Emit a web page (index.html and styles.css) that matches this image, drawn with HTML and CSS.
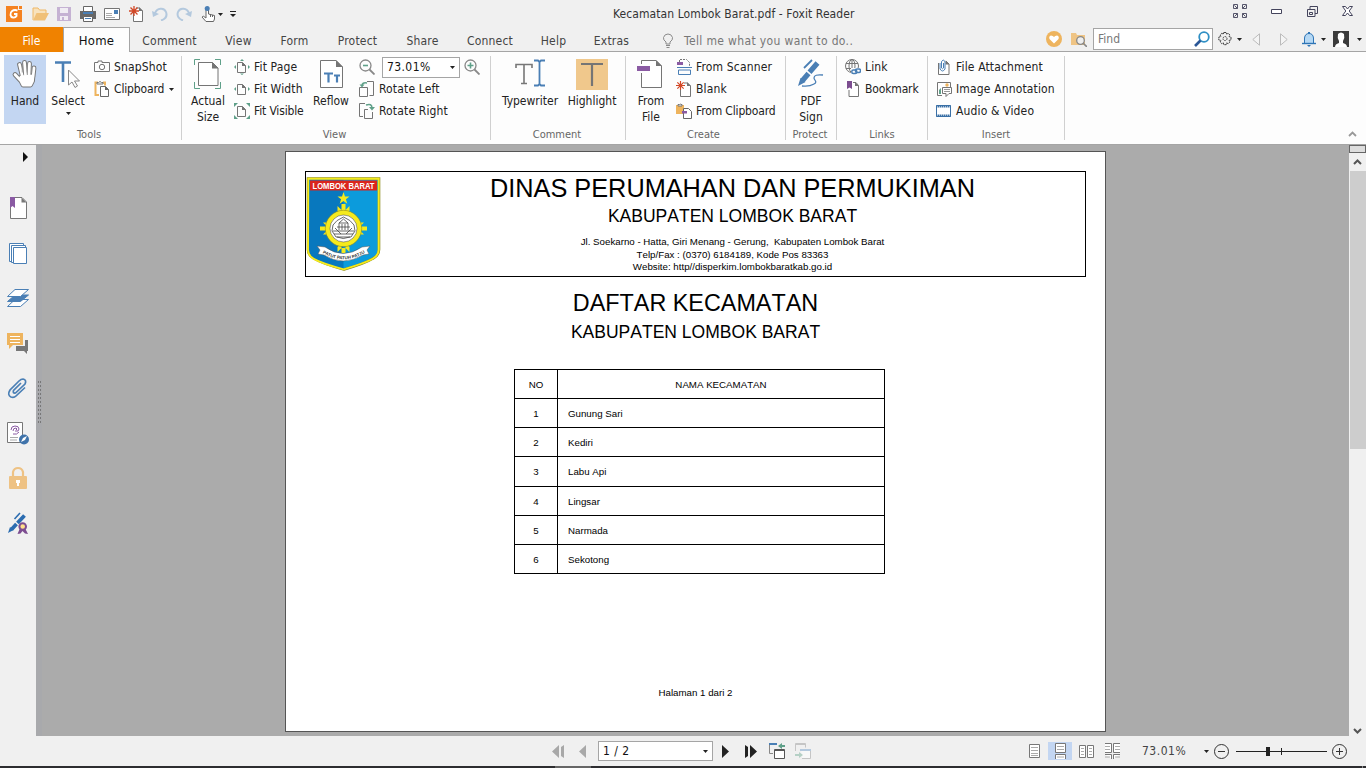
FILE: index.html
```html
<!DOCTYPE html>
<html lang="id">
<head>
<meta charset="utf-8">
<title>Kecamatan Lombok Barat.pdf - Foxit Reader</title>
<link rel="stylesheet" href="styles.css">
</head>
<body>
<svg class="defs" width="0" height="0">
  <defs>
    <symbol id="caret" viewBox="0 0 5 3"><path d="M0 0h5L2.5 3z" fill="#222"/></symbol>
    <symbol id="page" viewBox="0 0 9 11"><path d="M.5.5h5l3 3v7h-8z" fill="#fdfdfd" stroke="#757575"/><path d="M5 0l4 4H5z" fill="#757575"/></symbol>
    <symbol id="star" viewBox="0 0 10 10"><path d="M5 0v10M0 5h10M1.5 1.5l7 7M8.5 1.5l-7 7" stroke="#d24726" stroke-width="1.3"/></symbol>
  </defs>
</svg>
<div class="app">
  <header class="titlebar">
    <div class="quick">
      <span class="q first"><svg width="16" height="16"><path d="M0 0h12v4h4v12H0z" fill="#f58220"/><path d="M13 0h3v3h-3z" fill="#f58220"/><path d="M11.500 4.500C7 3 4 6 4.500 9c.5 3 4.500 3.500 6 1V8H8" fill="none" stroke="#fff" stroke-width="1.900"/></svg></span>
      <span class="q"><svg width="17" height="14"><path d="M1 13V1h5l1.500 2H14v3" fill="#f8e2bd" stroke="#efb867"/><path d="M1 13.500L4.500 6H17l-4 7.500z" fill="#f0c078"/></svg></span>
      <span class="q"><svg width="14" height="14"><path d="M0 0h14v14H0z" fill="#c5b2d3"/><path d="M3 1h8v5H3zM3 9h8v4H3z" fill="#f0edf3"/><path d="M5 10h2v3H5z" fill="#c5b2d3"/></svg></span>
      <span class="q"><svg width="16" height="16"><path d="M3.500 5V.5h9V5" fill="#fff" stroke="#666"/><path d="M0 5h16v8H0z" fill="#686868"/><path d="M3 6h10v2H3z" fill="#4a7fb5"/><path d="M3.500 10.500h9v5h-9z" fill="#fff" stroke="#666"/><path d="M5 12.500h6" stroke="#4a7fb5"/></svg></span>
      <span class="q"><svg width="16" height="12"><path d="M.5.500h15v11H.5z" fill="#fff" stroke="#757575"/><path d="M10 2h4v4h-4z" fill="#4a7fb5"/><path d="M2 5.500h6M2 7.500h6M2 9.500h9" stroke="#aaa"/></svg></span>
      <span class="q"><svg width="15" height="16"><path d="M4.500 6v9.500h9V5l-3-3H7" fill="#fff" stroke="#757575"/><path d="M10 1l4 4h-4z" fill="#757575"/><use href="#star" width="10" height="10"/></svg></span>
      <span class="q"><svg width="16" height="14"><path d="M3 6C5 1 12 0 14 5c1.500 4-1 7-5 8.500" fill="none" stroke="#b4c9de" stroke-width="2"/><path d="M0 4l1 6 6-3z" fill="#b4c9de"/></svg></span>
      <span class="q"><svg width="16" height="14"><path d="M13 6C11 1 4 0 2 5c-1.500 4 1 7 5 8.500" fill="none" stroke="#b4c9de" stroke-width="2"/><path d="M16 4l-1 6-6-3z" fill="#b4c9de"/></svg></span>
      <span class="q"><svg width="15" height="16"><path d="M5 10V3.500q1.200-2 2.500 0V8l6 1.500v3.500l-1 2.500H5L1 11q1-2 4 1z" fill="#fff" stroke="#666"/><path d="M9.500 8.500V11M11.500 9v2" stroke="#666"/><circle cx="6.200" cy="2.500" r="2.500" fill="#4a7fb5"/></svg></span>
      <svg class="caret" width="5" height="3"><use href="#caret"/></svg>
      <svg class="more" width="6" height="6"><path d="M0 .5h6" stroke="#222"/><path d="M0 3h6L3 6z" fill="#222"/></svg>
    </div>
    <div class="title">Kecamatan Lombok Barat.pdf - Foxit Reader</div>
    <div class="wins">
      <svg width="14" height="14" fill="none" stroke="#55556a"><path d="M.5.5h4v4h-4zM9.500.5h4v4h-4zM.5 9.500h4v4h-4zM9.500 9.500h4v4h-4zM1.500 1.500l3 3M12.500 1.500l-3 3M1.500 12.500l3-3M12.500 12.500l-3-3"/></svg>
      <svg width="11" height="5"><path d="M.5.500h10v4H.5z" fill="#fff" stroke="#44445c"/></svg>
      <svg width="11" height="11" fill="#f0f0f0" stroke="#44445c"><path d="M3 .5h7.500v7H3z"/><path d="M.5 3.500h7.500v7H.5z"/><path d="M2.500 6.500h3v2h-3z"/></svg>
      <svg width="11" height="10"><path d="M.5.5h3l2 2.500 2-2.500h3L7.200 5l3.300 4.500h-3l-2-2.500-2 2.500h-3L3.800 5z" fill="#fff" stroke="#44445c"/></svg>
    </div>
  </header>
  <nav class="tabs">
    <span class="file">File</span><span class="home">Home</span>
    <span class="tab w79">Comment</span><span class="tab w59">View</span><span class="tab w53">Form</span><span class="tab w73">Protect</span><span class="tab w57">Share</span><span class="tab w78">Connect</span><span class="tab w49">Help</span><span class="tab w67">Extras</span>
    <svg class="bulb" width="12" height="15" fill="none" stroke="#8a8a8a"><path d="M4 11V9Q1 7 1.500 4.500 2.500 1 6 1t4.500 3.500Q11 7 8 9v2zM4 12.500h4M4.500 14.500h3"/></svg>
    <span class="tell">Tell me what you want to do..</span>
    <div class="tools">
      <svg class="heart" width="16" height="16"><circle cx="8" cy="8" r="8" fill="#eeb45e"/><path d="M8 12.500L3.500 8Q2.500 5 5 4.500q2 0 3 1.500 1-1.500 3-1.500 2.500.5 1.500 3.500z" fill="#fff"/></svg>
      <svg class="fold" width="16" height="15"><path d="M0 1h5l1 2h8v10H0z" fill="#efc484"/><circle cx="9.500" cy="8.500" r="3.800" fill="#eee" stroke="#888" stroke-width="1.300"/><path d="M12 11l4 4" stroke="#888" stroke-width="1.600"/></svg>
      <div class="find"><span>Find</span><svg width="16" height="16"><circle cx="10" cy="6" r="4.800" fill="#fff" stroke="#2f8fc4" stroke-width="1.800"/><path d="M6.500 9.500L1 15" stroke="#2b5797" stroke-width="2.600"/></svg></div>
      <svg class="gear" width="14" height="14" fill="none" stroke="#444"><path d="M5.800.5h2.400l.4 1.600 1.600-.8 1.700 1.700-.8 1.600 1.900.5v2.800l-1.900.5.8 1.600-1.700 1.700-1.600-.8-.4 1.800H5.800l-.4-1.800-1.600.8-1.700-1.700.8-1.600L.8 8V5.100l2.100-.5L2.100 3l1.700-1.700 1.600.8z" stroke-dasharray="2.400 .6"/><circle cx="7" cy="6.600" r="2" stroke-dasharray="1.500 .6"/></svg>
      <svg class="c1" width="5" height="3"><use href="#caret"/></svg>
      <svg class="p1" width="8" height="13"><path d="M7.500.8v11.400L.8 6.500z" fill="#f4f4f4" stroke="#bbb"/></svg>
      <svg class="p2" width="8" height="13"><path d="M.5.8v11.400l6.700-5.700z" fill="#f4f4f4" stroke="#bbb"/></svg>
      <svg class="bell" width="14" height="15"><path d="M2.500 11.500V6Q3 1.500 7 1.500T11.500 6v5.500z" fill="#b5d8f4" stroke="#2e75b6"/><path d="M0 11.500h14" stroke="#2e75b6" stroke-width="1.400"/><path d="M5 13h4l-2 2zM6 0h2v2H6z" fill="#2e75b6"/></svg>
      <svg class="c1" width="5" height="3"><use href="#caret"/></svg>
      <svg class="ava" width="16" height="16"><path d="M0 0h16v16H0z" fill="#3b3b3b"/><path d="M2 16q0-3 4-4v-2Q4 7 5 3q3-3 6 0 1 4-1 7v2q4 1 4 4z" fill="#fff"/></svg>
      <svg class="c2" width="5" height="3"><use href="#caret"/></svg>
    </div>
  </nav>
  <section class="ribbon">
    <div class="group g-tools"><div class="body">
      <div class="big hand on"><svg width="32" height="36" stroke-linecap="round" stroke-linejoin="round"><path d="M10.500 9.500L13 20M15.500 7.500L16.500 20M20.500 8.500L20 20M25 13L24 22M6 19.500L12 26M12 22L24 21 23.500 26 21.500 30H14L12 26z" fill="none" stroke="#777" stroke-width="4.800"/><path d="M10.500 9.500L13 20M15.500 7.500L16.500 20M20.500 8.500L20 20M25 13L24 22M6 19.500L12 26M12 22L24 21 23.500 26 21.500 30H14L12 26z" fill="#fff" stroke="#fff" stroke-width="2.800"/><path d="M13.200 10v7M18.200 9v8M22.700 12v6" stroke="#999" stroke-width=".8"/></svg><b>Hand</b></div>
      <div class="big select"><svg width="32" height="36"><path d="M3 7.500h16M11 7v20" stroke="#4a7fb5" stroke-width="2.600" fill="none"/><path d="M16.500 15v15l3.500-3 3 5.500 2.500-1.500-3-5h5z" fill="#fdfdfd" stroke="#888"/></svg><b>Select</b><svg class="down" width="5" height="3"><use href="#caret"/></svg></div>
      <div class="list">
        <div><svg width="16" height="16"><path d="M.5 3.500H4V2h4v1.500h7.500v9H.5z" fill="#fdfdfd" stroke="#757575"/><circle cx="8" cy="8" r="2.700" fill="none" stroke="#757575"/></svg>SnapShot</div>
        <div class="tight"><svg width="16" height="16"><path d="M4 1.500H1.500v12.500H5M9 1.500h2v3" fill="none" stroke="#eeb45e" stroke-width="2"/><path d="M3 3V1.500h1.500Q6-.5 7.500 1.500H9V3z" fill="#fff" stroke="#757575"/><path d="M6.500 5.500h5l3 3v7h-8z" fill="#fff" stroke="#666"/><path d="M11 5l4 4h-4z" fill="#666"/></svg>Clipboard<svg class="next" width="5" height="3"><use href="#caret"/></svg></div>
      </div></div><h6>Tools</h6>
    </div>
    <div class="group g-view"><div class="body">
      <div class="big actual"><svg width="32" height="36"><path d="M2.500 10V4.500h5.500M23 4.500h5.500V10M2.500 27v6.500H8M23 33.500h5.500V27" fill="none" stroke="#5fa089"/><path d="M6.500 7.500h14l5.500 5.500v17.500H6.500z" fill="#fff" stroke="#757575"/><path d="M20 7l6.500 6.500H20z" fill="#757575"/></svg><b>Actual<br>Size</b></div>
      <div class="list fit">
        <div><svg width="16" height="16"><use href="#page" x="3" y="3" width="9" height="11"/><path d="M8 0l2 2H6zM8 16l2-1.500H6zM0 8l2-2v4zM16 8l-2-2v4z" fill="#5fa089"/></svg>Fit Page</div>
        <div><svg width="16" height="16"><use href="#page" x="3" y="3" width="9" height="11"/><path d="M0 8l2-2v4zM16 8l-2-2v4z" fill="#5fa089"/></svg>Fit Width</div>
        <div class="tight"><svg width="16" height="16"><use href="#page" x="3" y="3" width="9" height="11"/><path d="M0 0h4L0 4zM16 0h-4l4 4zM0 16h4l-4-4zM16 16h-4l4-4z" fill="#5fa089"/></svg>Fit Visible</div>
      </div>
      <div class="big reflow"><svg width="32" height="36"><path d="M5.500 5.500H21l6.500 6.500v20.500h-22z" fill="#fff" stroke="#757575"/><path d="M21 5l7 7h-7z" fill="#757575"/><path d="M9 18.500h9M13.500 18v9.500M19 20.500h6M22 20v7.500" stroke="#4a7fb5" stroke-width="2.200"/></svg><b>Reflow</b></div>
      <div class="list zoom">
        <div><svg width="16" height="16"><circle cx="6.500" cy="6.500" r="5.500" fill="#fdfdfd" stroke="#888" stroke-width="1.300"/><path d="M10.500 10.500l5 5" stroke="#888" stroke-width="1.800"/><path d="M4 6.500h5" stroke="#5fa089" stroke-width="1.600"/></svg><span class="combo">73.01%<svg width="5" height="3"><use href="#caret"/></svg></span><svg width="16" height="16"><circle cx="6.500" cy="6.500" r="5.500" fill="#fdfdfd" stroke="#888" stroke-width="1.300"/><path d="M10.500 10.500l5 5" stroke="#888" stroke-width="1.800"/><path d="M3.500 6.500h6M6.500 3.500v6" stroke="#5fa089" stroke-width="1.600"/></svg></div>
        <div><svg width="16" height="16" fill="none" stroke="#757575"><path d="M8 .5h6.500v14h-4M.5 6.500h8v9h-8z"/><path d="M3 5q0-4 5-3" stroke="#5fa089" stroke-width="1.500"/><path d="M.5 3.500h5L3 6.500z" fill="#5fa089" stroke="none"/></svg>Rotate Left</div>
        <div><svg width="16" height="16" fill="none" stroke="#757575"><path d="M6 .5H.5v13H4M5.500 15.500v-9H9M13.500 9v6.500h-8"/><path d="M7 2q6-2 6 3" stroke="#5fa089" stroke-width="1.500"/><path d="M10 4h6l-3 3.500z" fill="#5fa089" stroke="none"/></svg>Rotate Right</div>
      </div></div><h6>View</h6>
    </div>
    <div class="group g-comment"><div class="body">
      <div class="big type"><svg width="32" height="36"><path d="M2 13V9.500h16V13M10 9v20M7 28.500h6" fill="none" stroke="#777" stroke-width="1.600"/><path d="M20 5.500h4l1.500 1.500L27 5.500h4M20 30.500h4l1.500-1.500 1.500 1.500h4M25.500 6v24" fill="none" stroke="#4a7fb5" stroke-width="1.800"/></svg><b>Typewriter</b></div>
      <div class="big high"><svg width="32" height="36"><path d="M0 4h32v31H0z" fill="#f0c88c"/><path d="M5 9h22M16 9v22" stroke="#757575" stroke-width="2.200"/></svg><b>Highlight</b></div></div><h6>Comment</h6>
    </div>
    <div class="group g-create"><div class="body">
      <div class="big from"><svg width="32" height="36"><path d="M6.500 9V5.500H21l5.500 5.500v21.500h-20V18" fill="#fff" stroke="#757575"/><path d="M21 5l6 6h-6z" fill="#757575"/><path d="M2 11h13v5H2z" fill="#8a5aa3"/></svg><b>From<br>File</b></div>
      <div class="list">
        <div><svg width="16" height="16"><path d="M3.500 3V.5h7l3 3V7" fill="none" stroke="#757575" stroke-dasharray="2 1"/><path d="M1 3h6v3H1z" fill="#8a5aa3"/><path d="M1 8.500h15M2.500 11v4.500h12V11M2.500 11h12" fill="none" stroke="#4a7fb5"/></svg>From Scanner</div>
        <div><svg width="16" height="16"><path d="M4.500 6v9.500h10V5l-3-3H8" fill="#fff" stroke="#757575"/><path d="M11 1l4 4h-4z" fill="#757575"/><use href="#star" width="9" height="9"/></svg>Blank</div>
        <div class="tight"><svg width="16" height="16"><path d="M0 2h8v9H0z" fill="#eeb45e"/><path d="M2 3V1.500h1.500Q4 .5 5 1.500h1V3z" fill="#fff" stroke="#757575"/><path d="M7.500 5.500h5l3 3v7h-8z" fill="#fff" stroke="#666"/><path d="M6 8h5v2.500H6z" fill="#8a5aa3"/></svg>From Clipboard</div>
      </div></div><h6>Create</h6>
    </div>
    <div class="group g-protect"><div class="body">
      <div class="big sign"><svg width="32" height="36" fill="none" stroke="#4a7fb5"><path d="M7.500 25.500L13.500 18.500M14.500 17.300L22.500 8" stroke-width="5.200"/><path d="M3 31l2.500-8 5 4z" fill="#4a7fb5" stroke="none"/><path d="M9 13l8-8" stroke-width="1.800"/><path d="M28 20q-9-1-9 3c0 2 4 4 0 6-4 2.500-8 2.500-12 2" stroke-width="1.300"/></svg><b>PDF<br>Sign</b></div></div><h6>Protect</h6>
    </div>
    <div class="group g-links"><div class="body">
      <div class="list">
        <div><svg width="16" height="16"><g fill="none" stroke="#757575"><circle cx="7" cy="7" r="6.500"/><ellipse cx="7" cy="7" rx="3" ry="6.500"/><path d="M1 4.500h12M1 9.500h12M7 1v13"/></g><path d="M6 9h10v7H6z" fill="#fdfdfd"/><rect x="6.800" y="11" width="5" height="3.500" rx="1.500" fill="none" stroke="#4a7fb5" stroke-width="1.500"/><rect x="10.500" y="10" width="5" height="3.500" rx="1.500" fill="none" stroke="#4a7fb5" stroke-width="1.500"/></svg>Link</div>
        <div class="tight"><svg width="16" height="16"><path d="M8 1.500h3l2.500 3v11H4V9" fill="#fff" stroke="#757575"/><path d="M10 1l4 4h-4z" fill="#757575"/><path d="M2 0h5v8L4.500 6.500 2 8z" fill="#7c4d90"/></svg>Bookmark</div>
      </div></div><h6>Links</h6>
    </div>
    <div class="group g-insert"><div class="body">
      <div class="list">
        <div><svg width="16" height="16"><path d="M2.500 4v11.500h10.500V5l-3-3" fill="#fff" stroke="#757575"/><path d="M9.500 1.500l4 4h-4z" fill="#757575"/><path d="M4 4v6q2.500 4 5 0V2.500q-1.800-3-3.500 0V9q1 1.500 2 0V4" fill="none" stroke="#4a7fb5"/></svg>File Attachment</div>
        <div><svg width="16" height="16"><path d="M6 14.500H1.500v-13h13V6" fill="#fff" stroke="#757575"/><path d="M3 13V9l2-2v6z" fill="#5fa089"/><circle cx="11" cy="4" r="1.700" fill="#eeb45e"/><path d="M6.500 6.500h9v6H13l-3 3v-3H6.500z" fill="#fff" stroke="#757575"/><path d="M8 8.500h6M8 10.500h6" stroke="#999"/></svg>Image Annotation</div>
        <div><svg width="16" height="16"><path d="M.5 2.500h14v11H.5z" fill="#fff" stroke="#3b70a6"/><path d="M0 3.500h15M0 12.500h15" stroke="#3b70a6" stroke-width="2"/><path d="M1 4h14M1 12h14" stroke="#fff" stroke-dasharray="1 1"/></svg>Audio &amp; Video</div>
      </div></div><h6>Insert</h6>
    </div>
    <svg class="fold-up" width="9" height="6"><path d="M1 5l3.500-3.500L8 5" fill="none" stroke="#999" stroke-width="1.800"/></svg>
  </section>
  <main class="work">
    <aside class="side">
      <svg class="tri" width="5" height="10"><path d="M0 0v10l5-5z" fill="#111"/></svg>
      <div class="s"><svg width="22" height="24"><path d="M3.500 1.500H15l4.500 4.500v16.500h-16z" fill="#fff" stroke="#777"/><path d="M14.500 1.500l5 5h-5z" fill="#777"/><path d="M3 1h5v11l-2.500-2L3 12z" fill="#8a5aa3"/></svg></div>
      <div class="s"><svg width="22" height="24" fill="#fff" stroke="#4a7fb5"><path d="M2.500 2.500h14v18h-14z"/><path d="M4.500 4.500h14v17h-14z"/><path d="M6.500 6.500h13v16h-13z"/></svg></div>
      <div class="s"><svg width="24" height="22" fill="#fff" stroke="#4a7fb5"><path d="M1.500 19.500L9 12.500h13.500l-8 7z"/><path d="M1.500 14.500L9 8h13.500l-8 6.500z" fill="#4a7fb5"/><path d="M1.500 9.500L9 2.500h13.500l-8 7z"/></svg></div>
      <div class="s"><svg width="22" height="22"><path d="M9 8h12v11h-1v3l-3-3H9z" fill="#777"/><path d="M0 0h18v14H0z" fill="#f0f0f0"/><path d="M0 1h16v12H6l-4 4v-4H0z" fill="#eeb45e"/><path d="M3 4.500h10M3 7.500h10M3 10.500h10" stroke="#fff"/></svg></div>
      <div class="s"><svg width="22" height="22"><path d="M14 6L6.500 13.500q-1 3 2 2.500L18 7q2-4-2-5-2 0-4 2L3 13q-3 5 1 7 3 1 5-1l9-8.500" fill="none" stroke="#4a7fb5" stroke-width="1.700"/></svg></div>
      <div class="s"><svg width="24" height="24"><path d="M1.500 1.500h15v20h-15z" fill="#fff" stroke="#777"/><path d="M5 9q0-4 4-4t4 3-4 2M7 10q0-3 3-3 2 1 0 2M7 13q4 1 6-2" fill="none" stroke="#8a5aa3"/><path d="M4 16.500h8M4 19h7" stroke="#aaa"/><circle cx="18" cy="18.500" r="5" fill="#3f73aa"/><path d="M15 21l2-4 4-2-2 4z" fill="#fff"/></svg></div>
      <div class="s"><svg width="20" height="24"><path d="M5 11V6q1-4 5-4t5 4v5" fill="none" stroke="#eec284" stroke-width="2.200"/><rect x="1" y="10" width="18" height="13" rx="1" fill="#eec284"/><path d="M8 14h4v3h-1v3H9v-3H8z" fill="#fff"/></svg></div>
      <div class="s"><svg width="22" height="24" fill="none" stroke="#2b6cb0"><path d="M4.500 18.500l5-5.500M10.500 12L17.500 4.500" stroke-width="3.800"/><path d="M1 22l2-6 3.500 3z" fill="#2b6cb0" stroke="none"/><path d="M7.500 8l5.500-6" stroke-width="1.600"/><path d="M13 17l-2.500 6 3-.5 2-2.500 2.500 2.500 3 .5-3-6z" fill="#7c4d90" stroke="none"/><circle cx="15.700" cy="15.500" r="3.300" fill="#ffe08a" stroke="#7c4d90" stroke-width="2"/></svg></div>
    </aside>
    <div class="split"><i></i></div>
    <div class="canvas">
      <article class="sheet">
        <div class="letterhead">
          <svg class="logo" width="75" height="96" viewBox="0 0 75 96">
            <path d="M2 1.500h71v71q0 6-6 9-8 5-29 11-22-6-30-11-6-3-6-9z" fill="#0c9bdc" stroke="#8b8a1e" stroke-width="2.600"/>
            <path d="M2.500 2h35v90Q16 86 8.500 81.500 3 78 2.500 72z" fill="#0878be"/>
            <path d="M2.300 1.800h70.400v71q0 5.500-6 9-8 4.500-29 10.500-22-6-30-10.500-5.700-3-5.700-9z" fill="none" stroke="#f5ea1c" stroke-width="1.900"/>
            <path d="M4 3.500h67v10H4z" fill="#da251d"/>
            <text x="37.500" y="11.600" text-anchor="middle" textLength="62" lengthAdjust="spacingAndGlyphs">LOMBOK BARAT</text>
            <path d="M37.500 15l1.500 4.500h4.500l-3.600 2.700 1.400 4.500-3.800-2.800-3.800 2.800 1.400-4.500-3.600-2.700H36zM35.500 27h4v12h-4zM31.500 29l4 4h4l4-4v5l-3 4h-6l-3-4zM35.500 65h4v11h-4zM31.500 75l4-4h4l4 4v-5l-3-3h-6l-3 3zM14 49.500h12v4H14zM17 45.500l4 4h4v4h-4l-4 4h6l5-3v-6l-5-3zM49 49.500h12v4H49zM58 45.500l-4 4h-4v4h4l4 4h-6l-5-3v-6l5-3z" fill="#f5ea1c"/>
            <circle cx="37.500" cy="51.500" r="15.800" fill="#fff" stroke="#f5ea1c" stroke-width="4.500"/><circle cx="37.500" cy="51.500" r="18.200" fill="none" stroke="#8b8a1e" stroke-width=".6"/><circle cx="37.500" cy="51.500" r="13.500" fill="none" stroke="#555" stroke-width=".6"/>
            <g fill="none" stroke="#444" stroke-width=".8"><path d="M27 48q3-5 10.500-8Q45 43 48 48l1 6-4 6H30l-4-6zM27 54h21M28 57h19M31 50h13M33 46l4.500-4 4.500 4zM33 46v7M36 47v6M39 47v6M42 46v7M31 60q6 3 13 0M29 51l6 6M46 51l-6 6"/></g>
            <path d="M11 69l8 1q18 13 37 0l8-1-3 4 2 4-6 1q-20 12-39 0l-6-1 2-4z" fill="#fff" stroke="#555" stroke-width=".5"/>
            <path id="motto" d="M16.500 76q21 12.500 42 0" fill="none"/>
            <text class="motto"><textPath href="#motto">PATUT PATUH PATJU</textPath></text>
          </svg>
          <div class="office">
            <div class="l1">DINAS PERUMAHAN DAN PERMUKIMAN</div>
            <div class="l2">KABUPATEN LOMBOK BARAT</div>
            <div class="addr">Jl. Soekarno - Hatta, Giri Menang - Gerung,&nbsp; Kabupaten Lombok Barat<br>Telp/Fax : (0370) 6184189, Kode Pos 83363<br>Website: http//disperkim.lombokbaratkab.go.id</div>
          </div>
        </div>
        <div class="h1">DAFTAR KECAMATAN</div>
        <div class="l2">KABUPATEN LOMBOK BARAT</div>
        <div class="table">
          <div class="row head"><span>NO</span><span>NAMA KECAMATAN</span></div>
          <div class="row"><span>1</span><span>Gunung Sari</span></div>
          <div class="row"><span>2</span><span>Kediri</span></div>
          <div class="row"><span>3</span><span>Labu Api</span></div>
          <div class="row"><span>4</span><span>Lingsar</span></div>
          <div class="row"><span>5</span><span>Narmada</span></div>
          <div class="row"><span>6</span><span>Sekotong</span></div>
        </div>
        <div class="pageno">Halaman 1 dari 2</div>
      </article>
    </div>
    <div class="scroll">
      <i class="grip"></i>
      <svg class="up" width="9" height="6"><path d="M1 5l3.500-3.500L8 5" fill="none" stroke="#555" stroke-width="2"/></svg>
      <i class="thumb"></i>
      <svg class="dn" width="9" height="6"><path d="M1 1l3.500 3.500L8 1" fill="none" stroke="#555" stroke-width="2"/></svg>
    </div>
  </main>
  <footer class="status">
    <svg class="n1" width="13" height="13"><path d="M7 0v13L0 6.500zM9 2l3-2v13l-3-2z" fill="#a8a8a8"/></svg>
    <svg class="n2" width="7" height="13"><path d="M7 0v13L0 6.500z" fill="#a8a8a8"/></svg>
    <div class="pagebox">1 / 2<svg width="5" height="3"><use href="#caret"/></svg></div>
    <svg class="n3" width="8" height="13"><path d="M0 0v13l7-6.500z" fill="#222"/></svg>
    <svg class="n4" width="12" height="13"><path d="M0 0l3 2v9l-3 2zM5 0v13l7-6.500z" fill="#222"/></svg>
    <svg class="n5" width="16" height="16"><path d="M4 10.500H.5v-10H8" fill="none" stroke="#888"/><path d="M0 0h8v2H0z" fill="#4a7fb5"/><path d="M5.500 6.500h10v9h-10z" fill="#fff" stroke="#555"/><path d="M5 7.500h11" stroke="#555"/><path d="M9 3l4-3v2h3v2h-3v2z" fill="#5fa089"/></svg>
    <svg class="n6" width="16" height="16"><path d="M.5 8V.5h10v4" fill="none" stroke="#c5c5c5"/><path d="M.5 1.500h10" stroke="#c5c5c5"/><path d="M6 6.500h9.500v9H7" fill="#f8f8f8" stroke="#c5c5c5"/><path d="M5 6h11v2H5z" fill="#b4c9de"/><path d="M0 11h4V9l4 3-4 3v-2H0z" fill="#b5d0c5"/></svg>
    <div class="views">
      <span><svg width="11" height="14"><path d="M.5.500h10v13H.5z" fill="#fff" stroke="#777"/><path d="M2 3.500h7M2 6.500h7M2 9.500h7M2 11.500h7" stroke="#aaa"/></svg></span>
      <span class="on"><svg width="11" height="16"><path d="M.5.500h10v9H.5zM.5 16v-4.500h10V16" fill="#fff" stroke="#777"/><path d="M2 3.500h7M2 6.500h7M2 14h7" stroke="#aaa"/></svg></span>
      <span><svg width="15" height="13"><path d="M.5.500h6v12h-6zM8.500.500h6v12h-6z" fill="#fff" stroke="#777"/><path d="M2 3.500h3M2 6.500h3M2 9.500h3M10 3.500h3M10 6.500h3M10 9.500h3" stroke="#aaa"/></svg></span>
      <span><svg width="15" height="16"><path d="M0 .500h6.500v9H0M15 .500H8.500v9H15M0 11.500h6.500V16M15 11.500H8.500V16" fill="#fff" stroke="#777"/><path d="M0 3.500h5M0 6.500h5M10 3.500h5M10 6.500h5M0 14h5M10 14h5" stroke="#aaa"/></svg></span>
    </div>
    <span class="pct">73.01%</span>
    <svg class="c3" width="5" height="3"><use href="#caret"/></svg>
    <svg class="minus" width="15" height="15" fill="none" stroke="#333"><circle cx="7.500" cy="7.500" r="7"/><path d="M4 7.500h7"/></svg>
    <svg class="slider" width="91" height="9"><path d="M0 4.500h91M45.500 1v7" stroke="#222"/><path d="M30 0h4v9h-4z" fill="#222"/></svg>
    <svg class="plus" width="15" height="15" fill="none" stroke="#333"><circle cx="7.500" cy="7.500" r="7"/><path d="M4 7.500h7M7.500 4v7"/></svg>
  </footer>
  <div class="taskbar"><i></i><b></b></div>
</div>
</body>
</html>
```
FILE: styles.css
```css
* { box-sizing: border-box; }
body { margin: 0; background: #f0f0f0; color: #222; font-family: "DejaVu Sans Condensed", "DejaVu Sans", sans-serif; font-stretch: condensed; font-size: 12px; overflow: hidden; }
svg { display: block; flex: none; }
.defs { position: absolute; }
.app { width: 1366px; height: 768px; display: flex; flex-direction: column; white-space: nowrap; }

.titlebar { height: 27px; display: flex; }
.quick { display: flex; align-items: center; height: 28px; width: 613px; }
.q { width: 24px; display: flex; justify-content: center; }
.q.first { width: 28px; }
.quick .caret { margin-left: -2px; }
.quick .more { margin-left: 7px; }
.title { line-height: 28px; width: 613px; letter-spacing: .08px; color: #333; }
.wins { display: flex; align-items: center; height: 22px; justify-content: space-between; width: 120px; margin-left: 7px; flex: none; }

.tabs { height: 25px; display: flex; align-items: center; border-bottom: 1px solid #a5a5a5; color: #444; line-height: 27px; }
.file { width: 63px; height: 25px; background: #f08200; color: #fff; text-align: center; line-height: 28px; flex: none; }
.home { width: 67px; height: 25px; margin-bottom: -1px; border: 1px solid #a5a5a5; border-bottom: 0; background: #fdfdfd; color: #111; text-align: center; font-size: 13px; line-height: 26px; letter-spacing: .2px; flex: none; }
.tab { text-align: center; flex: none; letter-spacing: .2px; padding-top: 4px; }
.w79 { width: 79px; } .w59 { width: 59px; } .w53 { width: 53px; } .w73 { width: 73px; } .w57 { width: 57px; } .w78 { width: 78px; } .w49 { width: 49px; } .w67 { width: 67px; }
.bulb { margin: 2px 0 0 17px; }
.tell { margin-left: 10px; width: 362px; flex: none; color: #777; letter-spacing: .36px; padding-top: 4px; }
.tools { display: flex; align-items: center; flex: none; }
.heart { margin-left: 0; }
.fold { margin-left: 9px; }
.find { margin-left: 6px; width: 120px; height: 22px; border: 1px solid #a5a5a5; background: #fff; display: flex; align-items: center; justify-content: space-between; padding: 0 2px 0 4px; line-height: 18px; color: #777; }
.gear { margin-left: 5px; }
.c1 { margin-left: 5px; }
.p1 { margin-left: 10px; }
.p2 { margin-left: 20px; }
.bell { margin-left: 14px; }
.ava { margin-left: 7px; }
.c2 { margin-left: 8px; }

.ribbon { height: 93px; background: #fdfdfd; border-bottom: 1px solid #a5a5a5; display: flex; padding: 4px 0; }
.group { height: 84px; border-right: 1px solid #d0d0d0; flex: none; display: flex; flex-direction: column; }
.body { display: flex; height: 70px; flex: none; }
.group h6 { margin: 0; font-size: 11px; font-weight: 400; color: #666; text-align: center; line-height: 14px; height: 14px; padding-top: 1px; }
.big { display: flex; flex-direction: column; align-items: center; margin-top: -1px; height: 69px; flex: none; }
.big b { font-weight: 400; text-align: center; line-height: 16px; margin-top: 2px; }
.big .down { margin-top: 3px; }
.list div { height: 22px; display: flex; align-items: center; line-height: 22px; letter-spacing: .15px; }
.list div.tight { letter-spacing: -.15px; }
.list div > svg:first-child { margin-right: 4px; }
.list .next { margin: 0 0 0 5px; }
.g-tools { width: 182px; padding-left: 4px; }
.hand { width: 42px; }
.on { background: #c3d6f2; }
.select { width: 42px; margin-left: 1px; }
.g-tools .list { margin-left: 5px; }
.g-view { width: 309px; padding-left: 5px; }
.actual { width: 42px; }
.fit { margin-left: 5px; width: 77px; }
.reflow { width: 42px; margin-left: -1px; }
.zoom { margin-left: 7px; }
.combo { width: 78px; height: 21px; border: 1px solid #a5a5a5; background: #fff; margin: 0 4px 0 3px; display: flex; align-items: center; justify-content: space-between; padding: 0 4px; color: #111; letter-spacing: .4px; }
.g-comment { width: 135px; padding-left: 9px; }
.type { width: 60px; }
.high { width: 50px; margin-left: 7px; }
.g-create { width: 160px; padding-left: 8px; }
.from { width: 34px; }
.g-create .list { margin-left: 8px; }
.g-protect { width: 51px; padding-left: 5px; }
.sign { width: 40px; }
.g-links { width: 91px; }
.g-links .list { margin-left: 8px; }
.g-insert { width: 137px; }
.g-insert .list { margin-left: 8px; }
.g-tools h6 { margin-left: -7px; }
.g-view h6 { margin-left: -8px; }
.g-comment h6 { margin-left: -11px; }
.g-create h6 { margin-left: -12px; }
.g-protect h6 { margin-left: -7px; }
.group h6 { position: relative; top: 1px; }
.fold-up { margin: 75px 0 0 283px; }

.work { height: 591px; display: flex; background: #ababab; }
.side { width: 36px; background: #f0f0f0; flex: none; }
.side .tri { margin: 7px 0 23px 23px; }
.side .s { height: 45px; display: flex; align-items: center; justify-content: center; }
.split { width: 6px; background: #a8a9ac; display: flex; align-items: center; }
.split i { width: 4px; height: 44px; margin: -76px 0 0 2px; background: repeating-linear-gradient(#0000 0 2px, #a8a9ac 2px 4px), repeating-linear-gradient(90deg, #777 0 1px, #a8a9ac 1px 2px); }
.canvas { width: 1307px; padding: 6px 0 0 243px; }
.sheet { width: 821px; height: 581px; border: 1px solid #555; background: #fff; color: #000; font-family: "Liberation Sans", Arial, sans-serif; font-stretch: normal; font-kerning: none; padding: 19px 19px 0; font-size: 9.730px; text-align: center; display: flex; flex-direction: column; }
.letterhead { width: 781px; height: 106px; border: 1px solid #000; display: flex; flex: none; }
.logo { margin: 5px 0 0; }
.logo text { font: bold 8.500px "Liberation Sans", Arial, sans-serif; fill: #fff; }
.logo .motto { font-size: 4.400px; fill: #333; }
.office { width: 703px; }
.l1 { font-size: 25.300px; line-height: 30px; margin: 1px 0; }
.l2 { font-size: 17.520px; line-height: 24px; }
.addr { line-height: 12.700px; margin-top: 8px; }
.h1 { font-size: 23.360px; line-height: 30px; margin: 11px 0 2px; }
.table { width: 371px; margin: 25px 0 0 209px; border: solid #000; border-width: 1px 1px 0; }
.row { display: flex; height: 29.170px; border-bottom: 1px solid #000; line-height: 29px; }
.row span:first-child { width: 43px; border-right: 1px solid #000; }
.row span:last-child { flex: 1; text-align: left; padding-left: 10px; }
.row.head span:last-child { text-align: center; padding: 0; }
.pageno { margin-top: 112px; line-height: 14px; }
.scroll { width: 17px; background: #f0f0f0; flex: none; display: flex; flex-direction: column; align-items: center; }
.grip { width: 17px; height: 8px; border: 1px solid #666; background: #ddd; }
.up { margin: 6px 0; }
.thumb { width: 16px; height: 278px; background: #cdcdcd; }
.dn { margin-top: 279px; }

.status { height: 30px; display: flex; align-items: center; padding-left: 552px; }
.n2 { margin-left: 14px; }
.pagebox { margin-left: 12px; width: 115px; height: 20px; border: 1px solid #a5a5a5; background: #fff; display: flex; align-items: center; justify-content: space-between; padding: 0 4px; color: #111; letter-spacing: .5px; }
.n3 { margin-left: 9px; } .n4 { margin-left: 15px; } .n5 { margin-left: 12px; } .n6 { margin-left: 10px; }
.views { display: flex; margin-left: 211px; }
.views span { width: 24px; height: 18px; margin-right: 2px; display: flex; align-items: center; justify-content: center; }
.pct { margin-left: 16px; width: 62px; color: #444; letter-spacing: .5px; }
.minus { margin-left: 5px; }
.slider { margin-left: 7px; }
.plus { margin-left: 5px; }
.taskbar { height: 2px; background: #2d2d30; display: flex; justify-content: space-between; }
.taskbar i { width: 36px; margin-left: 555px; background: #666; }
.taskbar b { width: 1px; margin-right: 3px; background: #888; }
```
